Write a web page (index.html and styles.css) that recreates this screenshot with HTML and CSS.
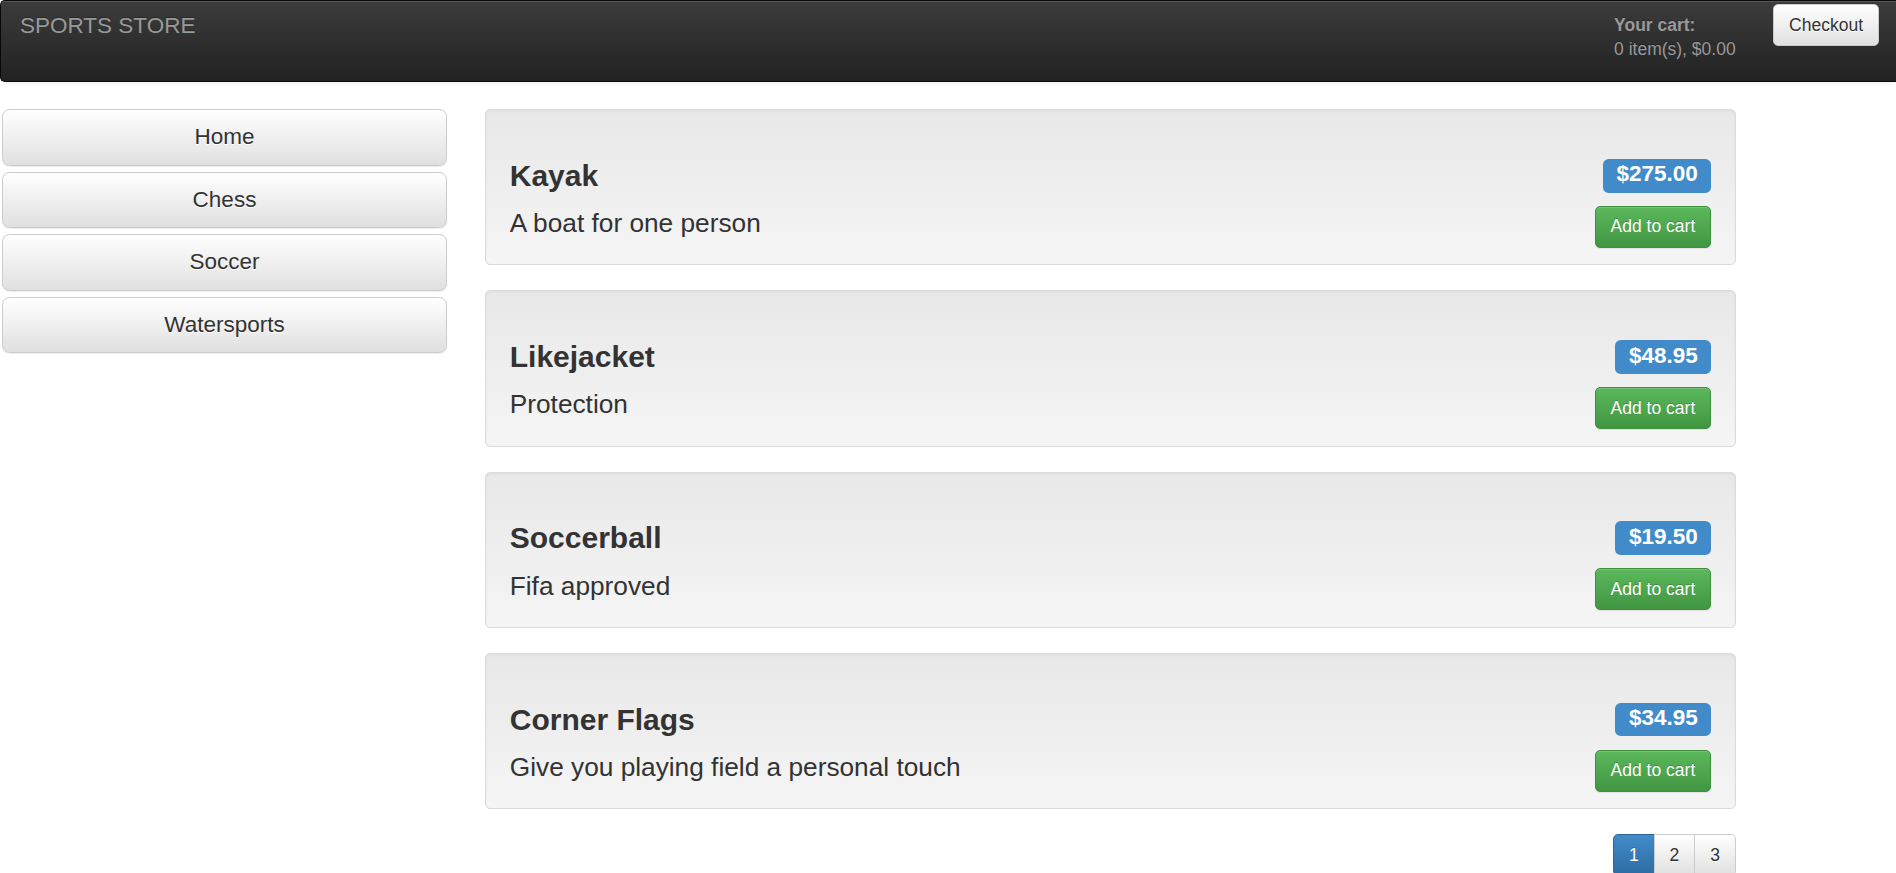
FILE: index.html
```html
<!DOCTYPE html>
<html lang="en">
<head>
<meta charset="utf-8">
<title>Sports Store</title>
<link rel="stylesheet" href="styles.css">
</head>
<body>
<header class="navbar">
  <span class="brand">SPORTS STORE</span>
  <div class="cart">
    <div class="cart-text"><b>Your cart:</b><br>0 item(s), $0.00</div>
    <a class="btn btn-default btn-checkout">Checkout</a>
  </div>
</header>
<div class="page">
  <nav class="sidebar">
    <a class="btn btn-default btn-lg btn-block">Home</a>
    <a class="btn btn-default btn-lg btn-block">Chess</a>
    <a class="btn btn-default btn-lg btn-block">Soccer</a>
    <a class="btn btn-default btn-lg btn-block">Watersports</a>
  </nav>
  <main class="products">
    <div class="well">
      <h3 class="title"><span>Kayak</span><span class="label">$275.00</span></h3>
      <div class="desc"><span>A boat for one person</span><button class="btn btn-success">Add to cart</button></div>
    </div>
    <div class="well">
      <h3 class="title"><span>Likejacket</span><span class="label">$48.95</span></h3>
      <div class="desc"><span>Protection</span><button class="btn btn-success">Add to cart</button></div>
    </div>
    <div class="well">
      <h3 class="title"><span>Soccerball</span><span class="label">$19.50</span></h3>
      <div class="desc"><span>Fifa approved</span><button class="btn btn-success">Add to cart</button></div>
    </div>
    <div class="well">
      <h3 class="title"><span>Corner Flags</span><span class="label">$34.95</span></h3>
      <div class="desc"><span>Give you playing field a personal touch</span><button class="btn btn-success">Add to cart</button></div>
    </div>
    <div class="pager">
      <div class="btn-group">
        <button class="btn btn-primary">1</button>
        <button class="btn btn-default">2</button>
        <button class="btn btn-default">3</button>
      </div>
    </div>
  </main>
</div>
</body>
</html>
```

FILE: styles.css
```css
html, body {
  margin: 0;
  overflow: hidden;
}
body {
  font-family: "Liberation Sans", Arial, sans-serif;
  font-size: 17.5px;
  line-height: 25px;
  color: #333;
  background: #fff;
}
* { box-sizing: border-box; }

.navbar {
  height: 82px;
  display: flex;
  justify-content: space-between;
  align-items: flex-start;
  background: linear-gradient(to bottom, #3c3c3c 0%, #222 100%);
  border: 1px solid #080808;
  border-right: none;
  border-radius: 5px 0 0 5px;
  box-shadow: inset 0 1px 0 rgba(255,255,255,.15), 0 1px 5px rgba(0,0,0,.075);
}
.brand {
  font-size: 22.5px;
  line-height: 25px;
  color: #999;
  padding: 12px 0 0 19px;
  text-shadow: 0 -1px 0 rgba(0,0,0,.25);
}
.cart {
  display: flex;
  align-items: flex-start;
}
.cart-text {
  width: 159px;
  color: #999;
  line-height: 24px;
  padding-top: 12px;
  text-shadow: 0 -1px 0 rgba(0,0,0,.25);
}
.btn {
  display: inline-block;
  font-family: inherit;
  font-size: 17.5px;
  line-height: 25px;
  padding: 7.5px 15px;
  border: 1px solid transparent;
  border-radius: 5px;
  text-align: center;
  white-space: nowrap;
  cursor: pointer;
  margin: 0;
}
.btn-default {
  color: #333;
  background: linear-gradient(to bottom, #fff 0%, #e0e0e0 100%);
  border-color: #ccc;
  text-shadow: 0 1px 0 #fff;
  box-shadow: inset 0 1px 0 rgba(255,255,255,.15), 0 1px 1px rgba(0,0,0,.075);
}
.btn-success {
  color: #fff;
  background: linear-gradient(to bottom, #5cb85c 0%, #419641 100%);
  border-color: #3e8f3e;
  text-shadow: 0 -1px 0 rgba(0,0,0,.2);
  box-shadow: inset 0 1px 0 rgba(255,255,255,.15), 0 1px 1px rgba(0,0,0,.075);
}
.btn-primary {
  color: #fff;
  background: linear-gradient(to bottom, #428bca 0%, #2d6ca2 100%);
  border-color: #2b669a;
  text-shadow: 0 -1px 0 rgba(0,0,0,.2);
}
.btn-checkout {
  margin: 3px 17px 0 0;
}

.page {
  display: flex;
  align-items: flex-start;
  padding: 27px 0 0 2px;
}
.sidebar {
  width: 445px;
  display: flex;
  flex-direction: column;
  gap: 6px;
}
.btn-lg {
  font-size: 22.5px;
  line-height: 30px;
  padding: 12.25px 20px;
  border-radius: 7.5px;
}
.btn-block {
  display: block;
  width: 100%;
}

.products {
  width: 1251px;
  margin-left: 38px;
}
.well {
  background: linear-gradient(to bottom, #e8e8e8 0%, #f5f5f5 100%);
  border: 1px solid #dcdcdc;
  border-radius: 5px;
  padding: 23.75px;
  margin-bottom: 25px;
  box-shadow: inset 0 1px 3px rgba(0,0,0,.05), 0 1px 0 rgba(255,255,255,.1);
}
.title {
  display: flex;
  justify-content: space-between;
  align-items: flex-start;
  margin: 25px 0 12.5px;
  font-size: 30px;
  line-height: 33px;
  font-weight: bold;
  color: #333;
}
.label {
  font-size: 22.5px;
  line-height: 1;
  font-weight: bold;
  color: #fff;
  background: #428bca;
  padding: 4.5px 13.5px 6.75px;
  border-radius: 5.6px;
}
.desc {
  display: flex;
  justify-content: space-between;
  align-items: flex-start;
  height: 35.5px;
  font-size: 26.25px;
  line-height: 36.75px;
  font-weight: 300;
}
.desc .btn {
  margin-top: 0.75px;
}

.pager {
  display: flex;
  justify-content: flex-end;
}
.btn-group {
  display: flex;
}
.btn-group .btn {
  border-radius: 0;
  width: 41.7px;
  padding-left: 0;
  padding-right: 0;
}
.btn-group .btn + .btn {
  margin-left: -1px;
}
.btn-group .btn:first-child {
  border-radius: 5px 0 0 5px;
}
.btn-group .btn:last-child {
  border-radius: 0 5px 5px 0;
}
```
